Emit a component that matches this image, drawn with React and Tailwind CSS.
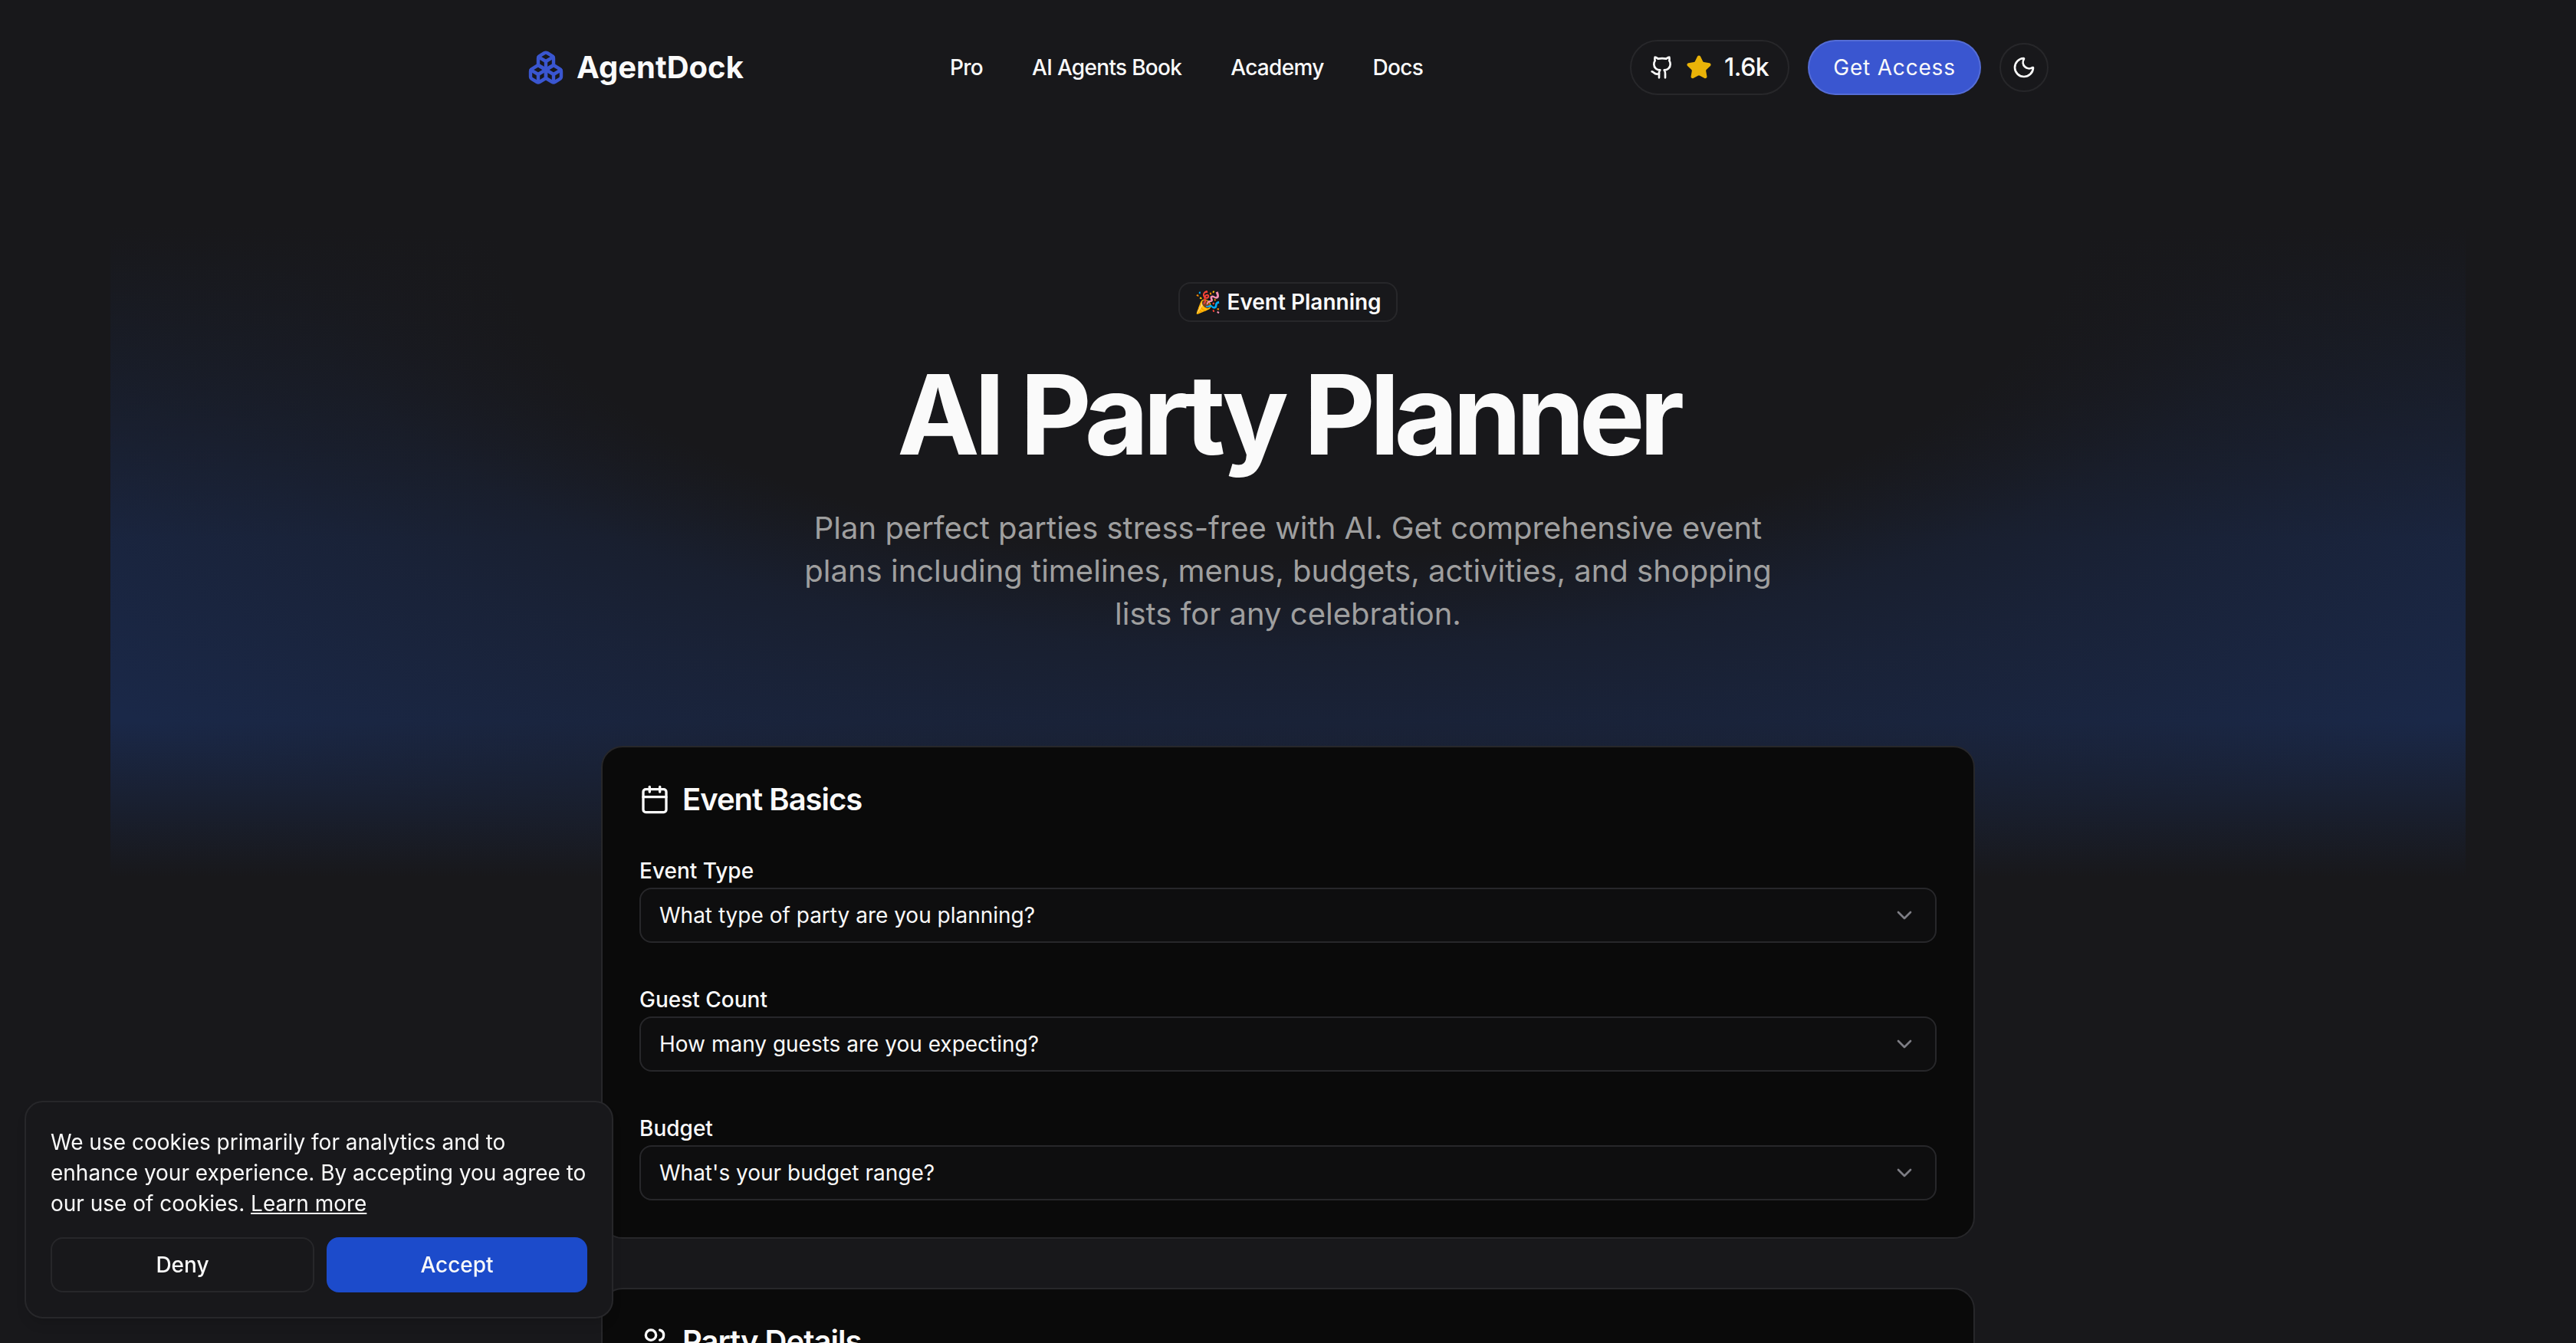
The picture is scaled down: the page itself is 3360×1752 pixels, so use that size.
import React from "react";
import { Boxes, Calendar, ChevronDown, Github, Moon, Star, Users } from "lucide-react";

const fields = [
  { label: "Event Type", placeholder: "What type of party are you planning?" },
  { label: "Guest Count", placeholder: "How many guests are you expecting?" },
  { label: "Budget", placeholder: "What's your budget range?" },
];

const navLinks = ["Pro", "AI Agents Book", "Academy", "Docs"];

function SelectField({ label, placeholder }) {
  return (
    <div className="flex flex-col gap-2">
      <label className="text-[28px] leading-[28px] font-medium text-[#fafafa]">{label}</label>
      <button className="flex h-[72px] w-full items-center justify-between rounded-[16px] border-2 border-[#27272a] bg-[#0e0e0f] pr-6 pl-6 text-[28px] text-[#fafafa]">
        <span>{placeholder}</span>
        <ChevronDown size={32} className="text-[#7d7d84]" />
      </button>
    </div>
  );
}

export default function App() {
  return (
    <div className="relative h-[1752px] overflow-hidden bg-[#18181b] font-['Inter',sans-serif] text-[#fafafa]">
      {/* Blue glow behind hero */}
      <div className="absolute top-[296px] left-[144px] h-[848px] w-[3072px] bg-[linear-gradient(to_bottom,transparent_76%,#18181b_100%),linear-gradient(to_bottom,#18181b_0%,transparent_48%),radial-gradient(ellipse_2400px_1000px_at_50%_0%,#18181b_43%,rgba(24,24,27,0.55)_55%,rgba(24,24,27,0.36)_65%,transparent_90%),linear-gradient(#1a2848,#1a2848)]" />

      <div className="relative">
        {/* Header */}
        <header className="mx-auto flex h-[176px] w-[1996px] items-center">
          <div className="flex w-[557px] items-center gap-4 pl-[6px]">
            <Boxes size={48} strokeWidth={2.2} className="text-[#3a56d0]" />
            <span className="text-[40px] font-bold">AgentDock</span>
          </div>
          <nav className="flex items-center gap-16 text-[28px] font-medium tracking-[-0.7px]">
            {navLinks.map((link) => (
              <a key={link} href="#">
                {link}
              </a>
            ))}
          </nav>
          <div className="ml-auto flex items-center gap-6 pr-[6px]">
            <div className="flex h-[72px] w-[208px] items-center gap-[15px] rounded-full border-2 border-[#27272a] pl-6 text-[32px] font-medium tracking-[-0.5px]">
              <Github size={32} />
              <span className="flex items-center gap-4">
                <Star size={34} className="fill-[#eab308] text-[#eab308]" />
                1.6k
              </span>
            </div>
            <button className="h-[72px] w-[226px] rounded-full bg-[#3a56d0] text-[28px] font-normal tracking-[0.8px] shadow-[inset_0_0_0_2px_rgba(255,255,255,0.14)]">
              Get Access
            </button>
            <button className="flex h-[64px] w-[64px] items-center justify-center rounded-full border-2 border-[#27272a]">
              <Moon size={32} />
            </button>
          </div>
        </header>

        {/* Hero */}
        <section className="mt-[192px] flex flex-col items-center">
          <span className="flex h-[52px] w-[286px] items-center justify-center gap-1 rounded-[16px] border-2 border-[#27272a] text-[28px] font-semibold">
            🎉 Event Planning
          </span>
          <h1 className="mt-[49px] text-[144px] leading-[144px] font-bold tracking-[-7.2px]">AI Party Planner</h1>
          <p className="mt-12 w-[1344px] text-center text-[40px] leading-[56px] text-[#9f9f9f]">
            Plan perfect parties stress-free with AI. Get comprehensive event plans including timelines, menus, budgets,
            activities, and shopping lists for any celebration.
          </p>
        </section>

        {/* Form cards */}
        <main className="mx-auto mt-[144px] flex w-[1792px] flex-col gap-16">
          <section className="rounded-[28px] border-2 border-[#27272a] bg-[#0a0a0a] p-12">
            <h2 className="flex h-10 items-center gap-4 text-[40px] font-semibold tracking-[-1px]">
              <Calendar size={40} />
              Event Basics
            </h2>
            <div className="mt-[59px] flex flex-col gap-[60px]">
              {fields.map((field) => (
                <SelectField key={field.label} {...field} />
              ))}
            </div>
          </section>
          <section className="rounded-[28px] border-2 border-[#27272a] bg-[#0a0a0a] p-12">
            <h2 className="flex h-10 items-center gap-4 text-[40px] font-semibold tracking-[-1px]">
              <Users size={40} />
              Party Details
            </h2>
          </section>
        </main>
      </div>

      {/* Cookie banner */}
      <div className="fixed bottom-[32px] left-[32px] w-[768px] rounded-[24px] border-2 border-[#27272a] bg-[#18181b] p-8 shadow-lg">
        <p className="text-[28px] leading-[40px]">
          We use cookies primarily for analytics and to enhance your experience. By accepting you agree to our use of
          cookies. <a href="#" className="underline">Learn more</a>
        </p>
        <div className="mt-6 flex gap-4">
          <button className="h-[72px] flex-1 rounded-[16px] border-2 border-[#27272a] text-[28px] font-medium">Deny</button>
          <button className="h-[72px] flex-1 rounded-[16px] bg-[#1c4bcb] text-[28px] font-medium">Accept</button>
        </div>
      </div>
    </div>
  );
}
